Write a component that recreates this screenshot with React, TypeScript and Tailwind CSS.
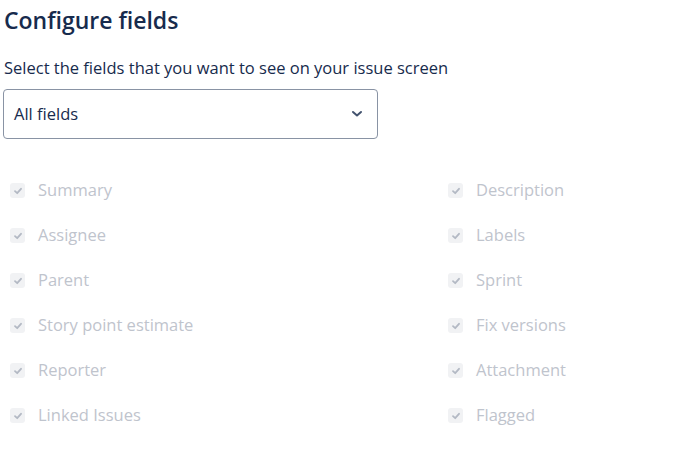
import React from "react";

const left = ["Summary", "Assignee", "Parent", "Story point estimate", "Reporter", "Linked Issues"];
const right = ["Description", "Labels", "Sprint", "Fix versions", "Attachment", "Flagged"];

function Item({ label }: { label: string }) {
  return (
    <div className="flex items-center h-[45px]">
      <div className="w-[15px] h-[15px] rounded-[3px] bg-[#f1f2f4] flex items-center justify-center ml-[10px] mr-[13px]">
        <svg width="10" height="10" viewBox="0 0 10 10">
          <path d="M2 5.2 L4.2 7.2 L8 2.8" fill="none" stroke="#b3b9c4" strokeWidth="1.8" strokeLinecap="round" strokeLinejoin="round" />
        </svg>
      </div>
      <span className="text-[16.5px] text-[#bfc4cd]">{label}</span>
    </div>
  );
}

export default function App() {
  return (
    <div className="w-[683px] h-[462px] bg-white font-['Open_Sans','Noto_Sans',sans-serif] text-[#172b4d]">
      <h1 className="pl-[4px] pt-[4px] text-[23px] leading-[32px] font-semibold">Configure fields</h1>
      <p className="pl-[4px] mt-[21px] text-[16.5px] leading-[22px]">Select the fields that you want to see on your issue screen</p>
      <div className="ml-[3px] mt-[10px] w-[375px] h-[50px] border border-[#8993a4] rounded-[4px] flex items-center justify-between pl-[10px] pr-[14px]">
        <span className="text-[16.5px]">All fields</span>
        <svg width="12" height="8" viewBox="0 0 12 8">
          <path d="M2 2 L6 5.5 L10 2" fill="none" stroke="#42526e" strokeWidth="2" strokeLinecap="round" strokeLinejoin="round" />
        </svg>
      </div>
      <div className="mt-[29px] grid grid-cols-[438px_1fr]">
        <div className="flex flex-col">
          {left.map((l) => <Item key={l} label={l} />)}
        </div>
        <div className="flex flex-col">
          {right.map((l) => <Item key={l} label={l} />)}
        </div>
      </div>
    </div>
  );
}
